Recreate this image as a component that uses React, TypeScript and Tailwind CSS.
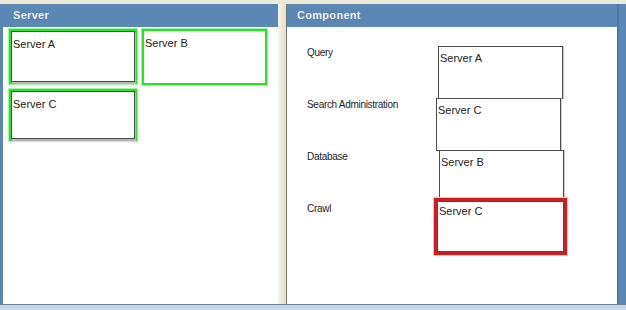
const servers = [
  { name: 'Server A', w: 'w-[128px]', h: 'h-[55px]', inner: true },
  { name: 'Server B', w: 'w-[125px]', h: 'h-[56px]', inner: false },
  { name: 'Server C', w: 'w-[128px]', h: 'h-[52px]', inner: true },
];

const roles = [
  { label: 'Query', server: 'Server A', shift: 'ml-[1px]' },
  { label: 'Search Administration', server: 'Server C', shift: '-ml-[1px]' },
  { label: 'Database', server: 'Server B', shift: 'ml-[2px]' },
];

function PanelHeader({ title }: { title: string }) {
  return (
    <div className="flex h-[23px] items-center bg-[#5b87b4] px-[10px] text-[11px] font-bold tracking-[0.3px] text-[#f2f6fb] [text-shadow:0_0_1px_#3d6590]">
      {title}
    </div>
  );
}

function ServerCard({ name, w, h, inner }: { name: string; w: string; h: string; inner: boolean }) {
  return (
    <div className={`${w} ${h} border-[2px] border-[#22e622] shadow-[0_0_0_1px_#a8f5a8]`}>
      <div
        className={`h-full bg-white px-[1px] pt-[6px] text-[11px] leading-[13px] text-[#222] ${
          inner ? 'border border-[#4a4a4a] shadow-[1px_2px_0_#b8b8b8]' : ''
        }`}
      >
        {name}
      </div>
    </div>
  );
}

function RoleBox({ server }: { server: string }) {
  return (
    <div className="h-[53px] w-[125px] border border-[#4d4d4d] bg-white px-[1px] pt-[5px] text-[11px] leading-[13px] text-[#222] shadow-[1px_0_0_#c8c8c8]">
      {server}
    </div>
  );
}

export default function App() {
  return (
    <div className="flex h-[310px] w-[626px] flex-col bg-[#ece9d8] font-['Liberation_Sans',Arial,sans-serif]">
      <div className="h-[4px] bg-[#ece9d8]" />
      <div className="flex h-[300px]">
        <div className="w-[3px] bg-[#5b87b4]" />
        <div className="flex w-[275px] flex-col bg-white">
          <PanelHeader title="Server" />
          <div className="flex flex-wrap gap-x-[5px] gap-y-[4px] pl-[6px] pt-[2px]">
            {servers.map((s) => (
              <ServerCard key={s.name} {...s} />
            ))}
          </div>
        </div>
        <div className="w-[9px] border-r border-[#77776a] bg-gradient-to-r from-[#f6f4ec] to-[#e3dfcc]" />
        <div className="flex flex-1 flex-col bg-white">
          <PanelHeader title="Component" />
          <div className="flex flex-col pl-[20px] pt-[19px]">
            {roles.map((r, i) => (
              <div key={r.label} className={`flex ${i > 0 ? '-mt-[1px]' : ''}`}>
                <div className="w-[130px] pt-[1px] text-[10px] leading-[12px] tracking-[-0.3px] text-[#222]">
                  {r.label}
                </div>
                <div className={r.shift}>
                  <RoleBox server={r.server} />
                </div>
              </div>
            ))}
            <div className="-mt-[5px] flex">
              <div className="w-[130px] pt-[5px] text-[10px] leading-[12px] tracking-[-0.3px] text-[#222]">
                Crawl
              </div>
              <div className="-ml-[3px] border-[3px] border-[#cc1f25] bg-white shadow-[0_0_0_1px_#f3c0c0]">
                <div className="h-[51px] w-[127px] border border-[#4d4d4d] px-[1px] pt-[3px] text-[11px] leading-[13px] text-[#222]">
                  Server C
                </div>
              </div>
            </div>
          </div>
        </div>
        <div className="w-[9px] border-l-[2px] border-[#4a78a8] bg-[#5b87b4]" />
      </div>
      <div className="h-[1px] bg-[#6f7f90]" />
      <div className="flex-1 bg-[#c7d6ea]" />
    </div>
  );
}
